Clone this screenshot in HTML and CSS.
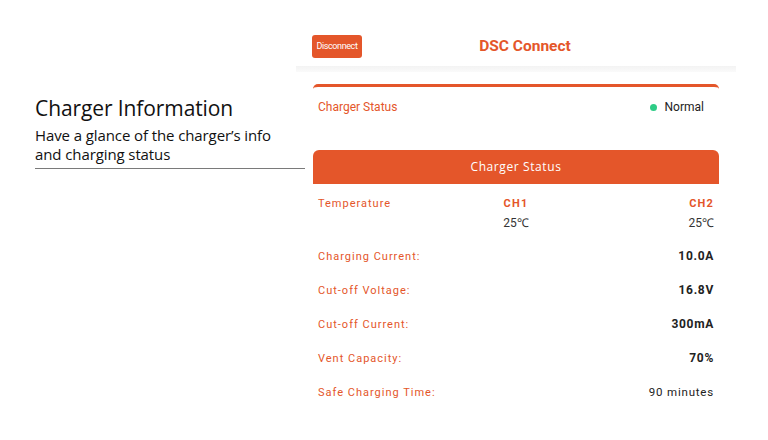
FILE: index.html
```html
<!DOCTYPE html>
<html>
<head>
<meta charset="utf-8">
<link rel="stylesheet" href="styles.css">
</head>
<body>
<div class="page">
  <div class="intro">
    <h1 class="intro-title">Charger Information</h1>
    <p class="intro-text">Have a glance of the charger’s info<br>and charging status</p>
    <div class="intro-rule"></div>
  </div>
  <div class="phone">
    <div class="topbar">
      <button class="btn-disconnect">Disconnect</button>
      <div class="app-title">DSC Connect</div>
    </div>
    <div class="topbar-shadow"></div>
    <div class="status-card">
      <span class="status-label">Charger Status</span>
      <span class="status-value"><span class="dot"></span>Normal</span>
    </div>
    <div class="info-card">
      <div class="info-head">Charger Status</div>
      <div class="temp-row">
        <span class="lbl">Temperature</span>
        <span class="ch mid">CH1</span>
        <span class="ch right">CH2</span>
        <span></span>
        <span class="tval mid">25℃</span>
        <span class="tval right">25℃</span>
      </div>
      <div class="row"><span class="lbl">Charging Current:</span><span class="val">10.0A</span></div>
      <div class="row"><span class="lbl">Cut-off Voltage:</span><span class="val">16.8V</span></div>
      <div class="row"><span class="lbl">Cut-off Current:</span><span class="val">300mA</span></div>
      <div class="row"><span class="lbl">Vent Capacity:</span><span class="val">70%</span></div>
      <div class="row"><span class="lbl">Safe Charging Time:</span><span class="val light">90 minutes</span></div>
    </div>
  </div>
</div>
</body>
</html>
```
FILE: styles.css
```css
html, body {
  margin: 0;
  padding: 0;
  background: #ffffff;
}
.page {
  display: flex;
  width: 768px;
  height: 440px;
  overflow: hidden;
}
.intro {
  width: 270px;
  padding: 94px 0 0 35px;
  font-family: "Open Sans", sans-serif;
  color: #111;
}
.intro-title {
  margin: 0;
  font-size: 21px;
  font-weight: 400;
  letter-spacing: -0.1px;
  line-height: 28px;
}
.intro-text {
  margin: 4px 0 0 0;
  font-size: 15px;
  line-height: 19px;
  letter-spacing: -0.1px;
}
.intro-rule {
  margin-top: 4px;
  height: 1px;
  border-top: 1px solid #7a7a7a;
  width: 270px;
}
.phone {
  width: 440px;
  margin-left: -9px;
  font-family: Roboto, sans-serif;
}
.topbar {
  display: flex;
  align-items: center;
  height: 40px;
  padding: 26px 0 0 16px;
  box-sizing: content-box;
}
.btn-disconnect {
  width: 50px;
  height: 23px;
  padding: 0;
  border: none;
  border-radius: 3px;
  background: #e4562a;
  color: #fff;
  font-family: Roboto, sans-serif;
  font-size: 9px;
  letter-spacing: -0.4px;
}
.app-title {
  width: 326px;
  text-align: center;
  color: #e4562a;
  font-size: 15.5px;
  font-weight: 700;
  margin-top: -1px;
}
.topbar-shadow {
  height: 6px;
  background: linear-gradient(#f3f3f3, #fafafa);
}
.status-card {
  margin: 12px 17px 0 17px;
  height: 40px;
  border-top: 3px solid #e4562a;
  border-radius: 5px 5px 0 0;
  display: flex;
  align-items: center;
  justify-content: space-between;
  padding: 0 15px 0 5px;
  font-size: 12px;
}
.status-label {
  color: #e4562a;
}
.status-value {
  display: flex;
  align-items: center;
  color: #222;
}
.dot {
  width: 7px;
  height: 7px;
  border-radius: 50%;
  background: #2ecc86;
  margin-right: 8px;
}
.info-card {
  margin: 23px 17px 0 17px;
}
.info-head {
  height: 34px;
  line-height: 34px;
  background: #e4562a;
  border-radius: 6px 6px 0 0;
  color: #fff;
  text-align: center;
  font-family: "Open Sans", sans-serif;
  font-size: 12px;
  letter-spacing: 0.6px;
}
.temp-row {
  display: grid;
  grid-template-columns: 1fr 1fr 1fr;
  padding: 13px 5px 0 5px;
  row-gap: 5px;
  font-size: 11px;
  letter-spacing: 1px;
  line-height: 14px;
}
.lbl {
  color: #e4562a;
  font-size: 11px;
  letter-spacing: 1px;
}
.ch {
  color: #e4562a;
  font-weight: 700;
  letter-spacing: 1.2px;
}
.tval {
  color: #333;
  letter-spacing: 0;
  font-size: 12px;
}
.mid { text-align: center; }
.right { text-align: right; }
.row {
  display: flex;
  justify-content: space-between;
  align-items: center;
  height: 34px;
  padding: 0 5px;
  font-size: 11px;
}
.temp-row + .row { margin-top: 9px; }
.val {
  color: #222;
  font-weight: 700;
  font-size: 12px;
  letter-spacing: 0.7px;
}
.val.light {
  font-weight: 400;
  font-size: 11.5px;
  letter-spacing: 0.8px;
}
```
